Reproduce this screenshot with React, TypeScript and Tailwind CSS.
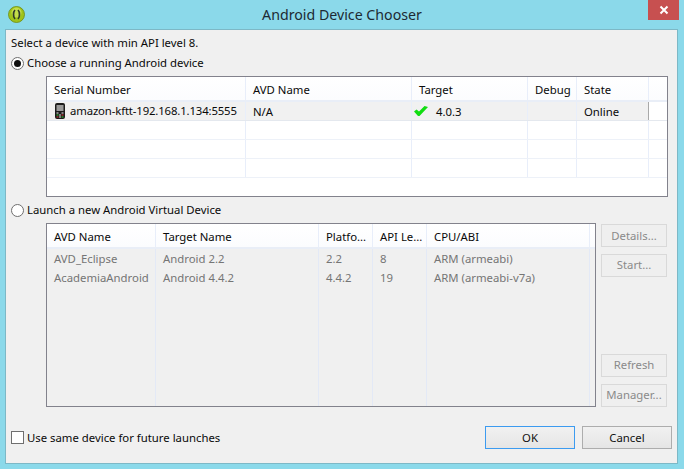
import React from "react";

const font = { fontFamily: '"Noto Sans", "Open Sans", sans-serif' };

function Cell({ w, children, cls = "", last = false }: { w: string; children?: React.ReactNode; cls?: string; last?: boolean }) {
  return (
    <div className={`${w} shrink-0 h-full flex items-center pl-[7px] whitespace-nowrap overflow-hidden ${last ? "" : "border-r border-[#e8eefa]"} ${cls}`}>
      {children}
    </div>
  );
}

function PhoneIcon() {
  return (
    <svg width="10" height="16" viewBox="0 0 10 16" className="shrink-0 mr-[5px]">
      <rect x="0" y="0" width="10" height="16" rx="2" fill="#1c1c1c" />
      <rect x="1.5" y="2" width="7" height="6" fill="#9a9a9a" />
      <rect x="1.5" y="9.5" width="2" height="1" fill="#eee" />
      <rect x="6.5" y="9.5" width="2" height="1" fill="#eee" />
      <rect x="1.5" y="11.5" width="2" height="1" fill="#3c3" />
      <rect x="4" y="11.5" width="2" height="1" fill="#ddd" />
      <rect x="6.5" y="11.5" width="2" height="1" fill="#d33" />
      <rect x="1.5" y="13.5" width="2" height="1" fill="#d33" />
      <rect x="4" y="13.5" width="2" height="1" fill="#ddd" />
      <rect x="6.5" y="13.5" width="2" height="1" fill="#3c3" />
    </svg>
  );
}

function Check() {
  return (
    <svg width="14" height="10" viewBox="0 0 14 10" className="shrink-0">
      <path d="M0 5.5 L2.5 3.5 L5 5.5 L10.5 0 L14 1 L5.5 10 L4 10 Z" fill="#11dd11" />
    </svg>
  );
}

function Radio({ on }: { on?: boolean }) {
  return (
    <span className="w-[13px] h-[13px] rounded-full border border-[#6f6f6f] bg-white flex items-center justify-center shrink-0">
      {on && <span className="w-[7px] h-[7px] rounded-full bg-[#111]" />}
    </span>
  );
}

function SideButton({ label, cls = "" }: { label: string; cls?: string }) {
  return (
    <div className={`w-[66px] h-[23px] border border-[#d9d9d9] bg-[#efefef] text-[#8a8a8a] flex items-center justify-center ${cls}`}>
      {label}
    </div>
  );
}

const cols1 = ["w-[199px]", "w-[166px]", "w-[116px]", "w-[49px]", "w-[72px]", "w-[18px]"];
const cols2 = ["w-[109px]", "w-[163px]", "w-[54px]", "w-[54px]", "w-[163px]", "w-[5px]"];

function EmptyRow() {
  return (
    <div className="h-[19px] flex border-b border-[#edf1f8]">
      {cols1.map((c, i) => (
        <Cell key={i} w={c} last={i === 5} />
      ))}
    </div>
  );
}

export default function App() {
  return (
    <div className="w-[684px] h-[469px] bg-[#8bd9ea] flex flex-col overflow-hidden text-[11.35px] text-[#0a0a0a]" style={font}>
      <div className="h-[29px] shrink-0 flex relative">
        <svg width="17" height="17" viewBox="0 0 17 17" className="ml-[8px] mt-[6px] shrink-0">
          <circle cx="8.5" cy="8.5" r="8" fill="#9fc31a" stroke="#6d8a10" strokeWidth="0.8" />
          <circle cx="8.5" cy="6.5" r="5" fill="#c4de4a" />
          <path d="M7 4 C5 6 5 11 7 13 M10 4 C12 6 12 11 10 13" fill="none" stroke="#2f3a2a" strokeWidth="1.7" />
        </svg>
        <div className="flex-1 text-center text-[14.2px] leading-[30px] text-[#1d2a33] pl-[11px]">Android Device Chooser</div>
        <div className="w-[31px] h-[20px] bg-[#c75050] mr-[5px] flex items-center justify-center shrink-0">
          <svg width="10" height="10" viewBox="0 0 10 10">
            <path d="M1.5 1.5 L8.5 8.5 M8.5 1.5 L1.5 8.5" stroke="#fff" strokeWidth="2" />
          </svg>
        </div>
      </div>

      <div className="ml-[5px] mr-[6px] h-[435px] border border-[#7db8c6] bg-[#f0f0f0] flex flex-col relative">
        <div className="pl-[5px] mt-[5px] h-[17px] leading-[16px]">Select a device with min API level 8.</div>
        <div className="pl-[5px] mt-[3px] h-[17px] flex items-center gap-[3px]">
          <Radio on />
          <span className="mb-[2px]">Choose a running Android device</span>
        </div>

        <div className="ml-[40px] mt-[4px] w-[622px] h-[121px] border border-[#82828c] bg-white shrink-0">
          <div className="h-[25px] flex border-b-2 border-[#e9eef7] bg-gradient-to-b from-white to-[#fbfcfe]">
            {["Serial Number", "AVD Name", "Target", "Debug", "State", ""].map((t, i) => (
              <Cell key={i} w={cols1[i]} last={i === 5} cls="pt-[2px]">{t}</Cell>
            ))}
          </div>
          <div className="h-[19px] flex border-b border-[#e4e8ee]">
            <div className="flex w-[602px] bg-[#f1f1f1] border-r border-[#a9a9a9]">
              <Cell w={cols1[0]} cls="!pl-[8px]"><PhoneIcon /><span className="tracking-[-0.14px]">amazon-kftt-192.168.1.134:5555</span></Cell>
              <Cell w={cols1[1]} cls="pt-[1px]">N/A</Cell>
              <Cell w={cols1[2]} cls="!pl-[2px]"><Check /><span className="ml-[8px] mt-[1px]">4.0.3</span></Cell>
              <Cell w={cols1[3]} />
              <Cell w="w-[70px]" cls="pt-[1px]" last>Online</Cell>
            </div>
          </div>
          <EmptyRow />
          <EmptyRow />
          <EmptyRow />
        </div>

        <div className="pl-[5px] mt-[5px] h-[17px] flex items-center gap-[3px]">
          <Radio />
          <span className="mb-[2px]">Launch a new Android Virtual Device</span>
        </div>

        <div className="ml-[40px] mt-[4px] pr-[5px] flex gap-[5px] h-[184px] shrink-0">
          <div className="w-[550px] h-full border border-[#82828c] bg-[#f0f0f0] flex flex-col shrink-0">
            <div className="h-[25px] flex border-b-2 border-[#e9eef7] bg-gradient-to-b from-white to-[#fbfcfe] shrink-0">
              {["AVD Name", "Target Name", "Platfo...", "API Le...", "CPU/ABI", ""].map((t, i) => (
                <Cell key={i} w={cols2[i]} last={i === 5} cls="pt-[2px]">{t}</Cell>
              ))}
            </div>
            <div className="flex-1 flex text-[#757575]">
              {[
                ["AVD_Eclipse", "AcademiaAndroid"],
                ["Android 2.2", "Android 4.4.2"],
                ["2.2", "4.4.2"],
                ["8", "19"],
                ["ARM (armeabi)", "ARM (armeabi-v7a)"],
                ["", ""],
              ].map((col, i) => (
                <div key={i} className={`${cols2[i]} shrink-0 pl-[7px] whitespace-nowrap overflow-hidden ${i === 5 ? "" : "border-r border-[#e3e9f6]"}`}>
                  <div className="h-[19px] leading-[19px]">{col[0]}</div>
                  <div className="h-[19px] leading-[19px]">{col[1]}</div>
                </div>
              ))}
            </div>
          </div>
          <div className="flex flex-col w-[66px] h-full">
            <SideButton label="Details..." cls="mt-[1px]" />
            <SideButton label="Start..." cls="mt-[7px] pb-[1px]" />
            <SideButton label="Refresh" cls="mt-auto pb-[1px]" />
            <SideButton label="Manager..." cls="mt-[7px] pb-[1px]" />
          </div>
        </div>

        <div className="mt-[18px] pl-[5px] pr-[5px] flex items-center h-[25px]">
          <span className="w-[13px] h-[13px] border border-[#6f6f6f] bg-white shrink-0" />
          <span className="ml-[3px]">Use same device for future launches</span>
          <div className="ml-auto w-[90px] h-[23px] border border-[#3c9bf0] bg-gradient-to-b from-[#f1f1f1] to-[#e5e5e5] flex items-center justify-center text-[#111]">OK</div>
          <div className="ml-[7px] w-[90px] h-[23px] border border-[#adadad] bg-gradient-to-b from-[#f1f1f1] to-[#e5e5e5] flex items-center justify-center text-[#111]">Cancel</div>
        </div>
      </div>
    </div>
  );
}
